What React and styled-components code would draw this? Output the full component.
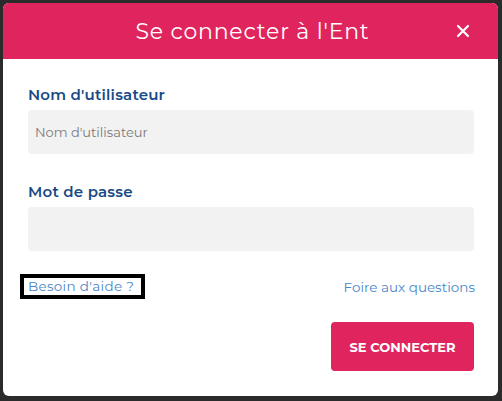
import React from "react";
import styled, { createGlobalStyle } from "styled-components";

const GlobalStyle = createGlobalStyle`
  html, body {
    margin: 0;
    padding: 0;
    background: #2b2b2b;
    font-family: "Montserrat", "Open Sans", "Liberation Sans", sans-serif;
  }
`;

const Overlay = styled.div`
  width: 502px;
  height: 401px;
  padding: 3px 4px 5px 3px;
  box-sizing: border-box;
  background: #2b2b2b;
`;

const Modal = styled.div`
  width: 495px;
  height: 393px;
  background: #fff;
  border-radius: 6px;
  overflow: hidden;
  display: flex;
  flex-direction: column;
`;

const Header = styled.div`
  height: 56px;
  background: #e0245e;
  display: flex;
  align-items: center;
  justify-content: center;
  position: relative;
`;

const Title = styled.h1`
  margin: 0;
  color: #fff;
  font-size: 22px;
  font-weight: 400;
  letter-spacing: 0.8px;
  padding-left: 4px;
`;

const Close = styled.button`
  position: absolute;
  right: 26px;
  top: 21px;
  width: 16px;
  height: 16px;
  padding: 0;
  border: none;
  background: none;
  cursor: pointer;
  display: flex;
`;

const Body = styled.form`
  flex: 1;
  padding: 26px 24px 25px 25px;
  display: flex;
  flex-direction: column;
`;

const Label = styled.label`
  color: #174a84;
  font-size: 15px;
  font-weight: 600;
  line-height: 20px;
  letter-spacing: 0.2px;
  margin-bottom: 5px;
`;

const Input = styled.input`
  height: 44px;
  box-sizing: border-box;
  border: none;
  border-radius: 4px;
  background: #f2f2f2;
  padding: 0 7px;
  font-family: inherit;
  font-size: 13px;
  color: #333;
  margin-bottom: ${(p) => (p.$last ? "23px" : "28px")};
  outline: none;
  &::placeholder {
    color: #7a7a7a;
  }
`;

const LinkRow = styled.div`
  display: flex;
  justify-content: space-between;
  align-items: center;
  height: 25px;
`;

const HelpLink = styled.a`
  color: #4a86c8;
  font-size: 13.5px;
  letter-spacing: 0.3px;
  text-decoration: none;
  margin-left: -8px;
  padding: 1px 7px 1px 4px;
  border: 4px solid #000;
  line-height: 15px;
`;

const Link = styled.a`
  color: #4a86c8;
  font-size: 13.5px;
  letter-spacing: 0;
  text-decoration: none;
  margin-right: -1px;
`;

const Footer = styled.div`
  margin-top: auto;
  display: flex;
  justify-content: flex-end;
`;

const Submit = styled.button`
  width: 143px;
  height: 49px;
  border: none;
  border-radius: 4px;
  background: #e0245e;
  color: #fff;
  font-family: inherit;
  font-size: 13px;
  font-weight: 700;
  cursor: pointer;
`;

export default function App() {
  return (
    <>
      <GlobalStyle />
      <Overlay>
        <Modal>
          <Header>
            <Title>Se connecter à l'Ent</Title>
            <Close aria-label="Fermer">
              <svg width="14" height="14" viewBox="0 0 14 14">
                <path d="M2 2 L12 12 M12 2 L2 12" stroke="#fff" strokeWidth="2.2" strokeLinecap="round" />
              </svg>
            </Close>
          </Header>
          <Body onSubmit={(e) => e.preventDefault()}>
            <Label htmlFor="user">Nom d'utilisateur</Label>
            <Input id="user" placeholder="Nom d'utilisateur" />
            <Label htmlFor="pass">Mot de passe</Label>
            <Input id="pass" type="password" $last />
            <LinkRow>
              <HelpLink href="#">Besoin d'aide ?</HelpLink>
              <Link href="#">Foire aux questions</Link>
            </LinkRow>
            <Footer>
              <Submit type="submit">SE CONNECTER</Submit>
            </Footer>
          </Body>
        </Modal>
      </Overlay>
    </>
  );
}
